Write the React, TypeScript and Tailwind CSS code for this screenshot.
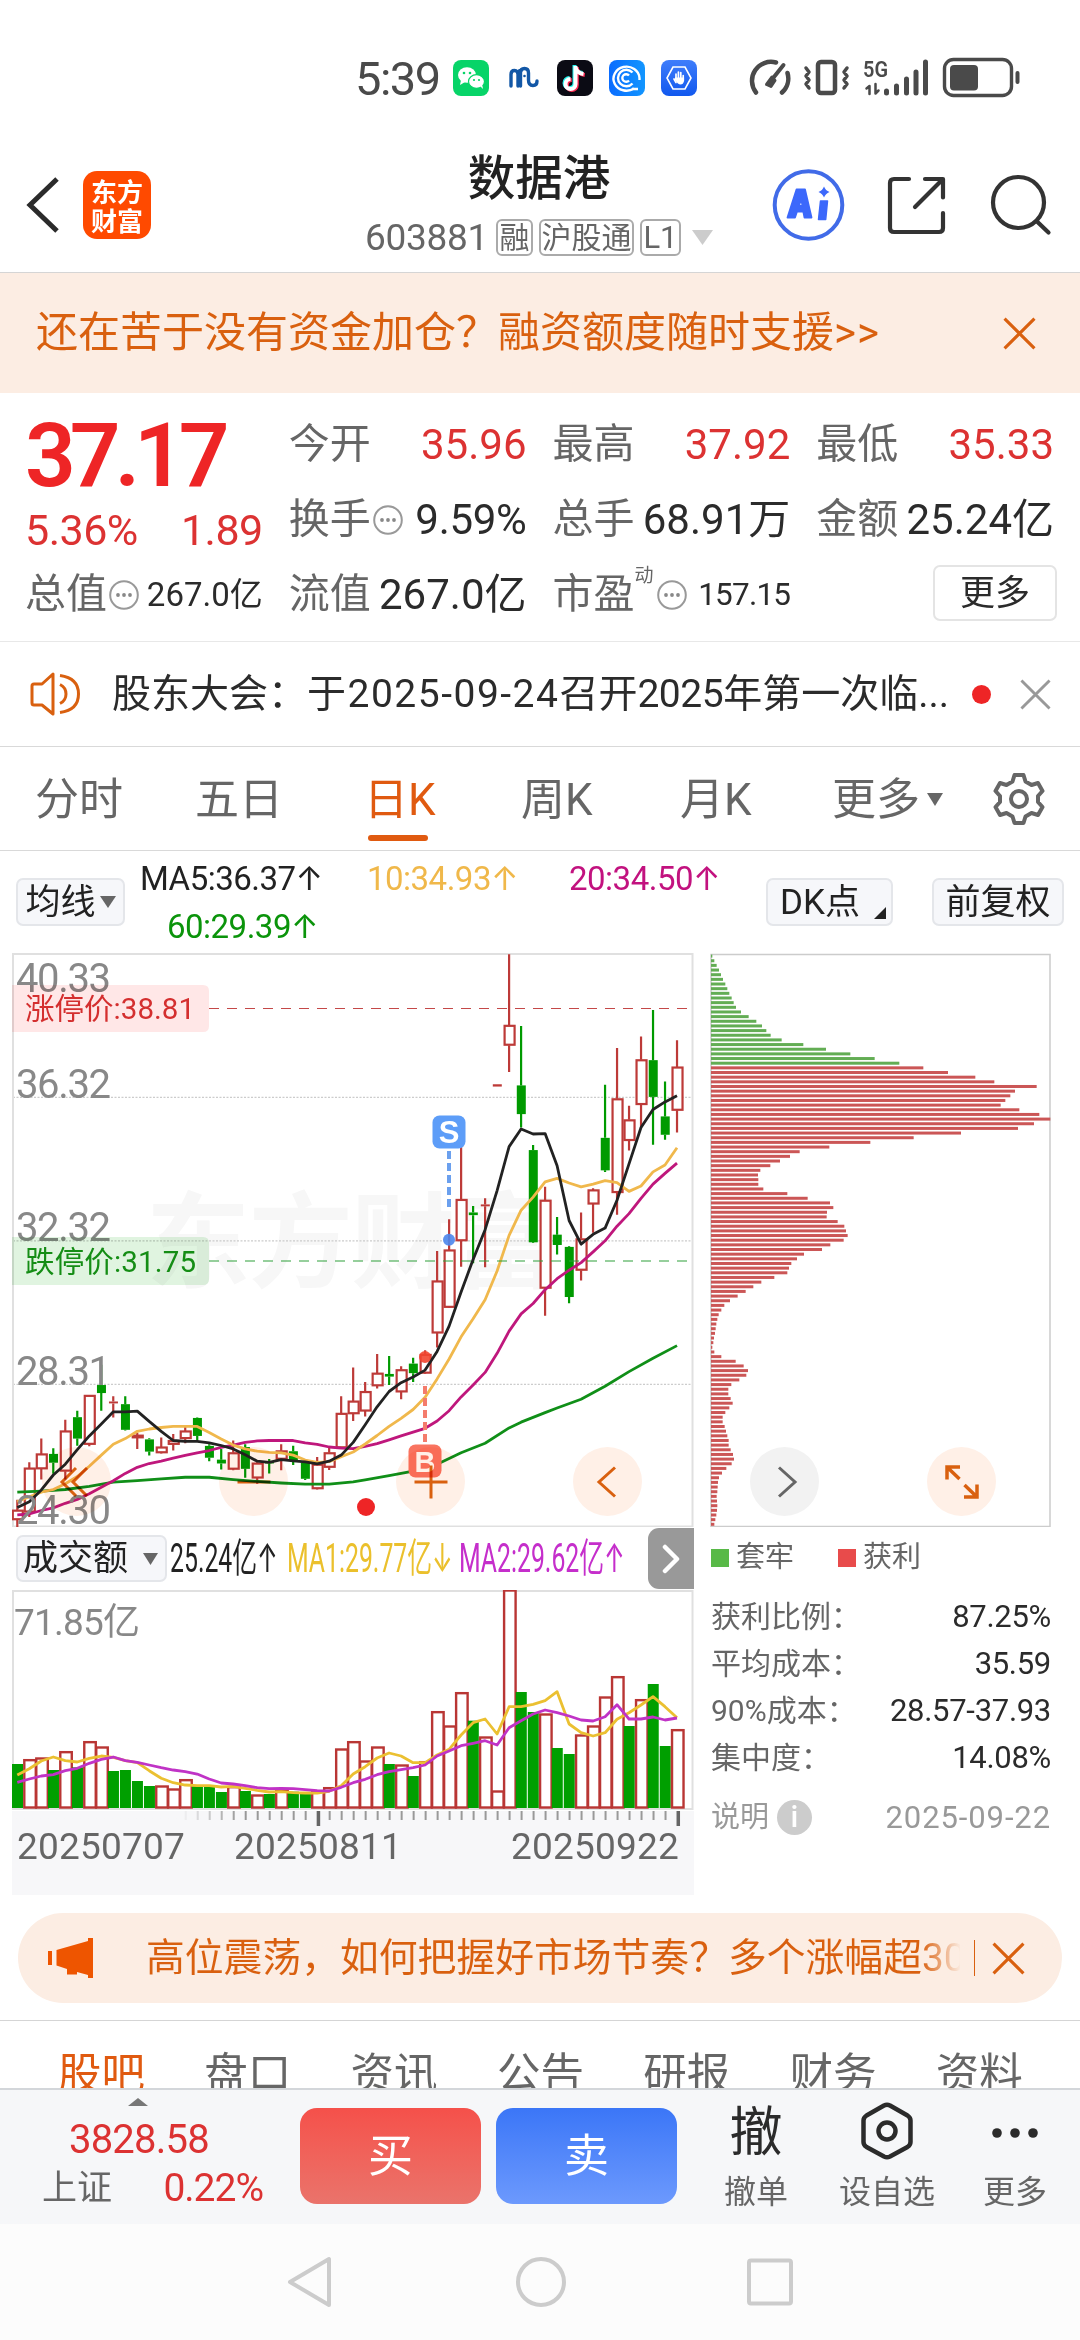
import type { ReactNode } from "react";

/* ---------- chart data ---------- */

const STEP = 11.995;
const X0 = 17.3;
const cx = (i: number) => X0 + i * STEP;
const py = (z: number) => 940 + z / 2.6133;
const vy = (z: number) => 1520 + z / 3;

type Candle = [string, number, number, number, number];

const candles: Candle[] = [
  ["r", 1463, 1490, 1515, 1535], ["r", 1365, 1380, 1495, 1508], ["r", 1303, 1343, 1382, 1410], ["g", 1328, 1343, 1366, 1395],
  ["r", 1254, 1283, 1388, 1410], ["g", 1230, 1247, 1303, 1322], ["r", 1190, 1190, 1318, 1323], ["g", 1110, 1163, 1184, 1230],
  ["x", 1192, 1206, 1211, 1248], ["g", 1192, 1213, 1280, 1282], ["r", 1288, 1294, 1301, 1330], ["g", 1302, 1305, 1337, 1347],
  ["r", 1300, 1325, 1340, 1342], ["r", 1291, 1308, 1318, 1334], ["r", 1268, 1283, 1303, 1315], ["g", 1248, 1249, 1296, 1308],
  ["g", 1318, 1322, 1353, 1362], ["g", 1330, 1358, 1368, 1384], ["r", 1308, 1340, 1383, 1386], ["g", 1318, 1325, 1382, 1405],
  ["r", 1365, 1367, 1406, 1421], ["g", 1356, 1364, 1368, 1394], ["r", 1318, 1335, 1357, 1386], ["g", 1322, 1336, 1360, 1372],
  ["g", 1360, 1366, 1408, 1411], ["r", 1351, 1370, 1434, 1436], ["r", 1327, 1340, 1378, 1385], ["r", 1192, 1237, 1327, 1330],
  ["r", 1117, 1205, 1238, 1257], ["r", 1155, 1180, 1231, 1245], ["r", 1082, 1132, 1165, 1172], ["g", 1087, 1134, 1141, 1163],
  ["r", 1114, 1123, 1181, 1200], ["g", 1092, 1107, 1132, 1155], ["r", 1072, 1083, 1132, 1134], ["r", 813, 891, 1027, 1065],
  ["r", 730, 810, 960, 962], ["r", 510, 678, 786, 854], ["g", 695, 712, 719, 845], ["x", 675, 691, 696, 855],
  ["x", 377, 377, 383, 383], ["r", 37, 223, 275, 345], ["g", 225, 380, 455, 490], ["g", 536, 549, 790, 792],
  ["r", 645, 680, 910, 982], ["g", 724, 770, 797, 822], ["g", 800, 802, 933, 949], ["r", 712, 781, 863, 890],
  ["r", 649, 653, 690, 765], ["g", 378, 517, 602, 606], ["r", 282, 415, 660, 718], ["r", 433, 470, 524, 550],
  ["r", 252, 313, 430, 490], ["g", 183, 314, 410, 535], ["g", 370, 461, 509, 522], ["r", 262, 332, 445, 503],
];

const ma5 = [1483, 1468, 1437, 1398, 1370, 1332, 1296, 1265, 1233, 1233, 1231, 1258, 1284, 1308, 1310, 1310, 1314, 1321, 1330, 1345, 1362, 1365, 1358, 1361, 1364, 1369, 1362, 1346, 1313, 1267, 1220, 1180, 1157, 1142, 1124, 1075, 1009, 920, 835, 757, 655, 540, 494, 507, 506, 590, 733, 795, 769, 753, 680, 585, 490, 443, 423, 407];
const ma10 = [1468, 1455, 1443, 1436, 1421, 1402, 1375, 1346, 1318, 1303, 1284, 1278, 1274, 1271, 1271, 1271, 1287, 1304, 1320, 1330, 1336, 1339, 1340, 1346, 1359, 1365, 1363, 1350, 1338, 1317, 1295, 1271, 1250, 1227, 1195, 1147, 1095, 1037, 990, 940, 865, 772, 706, 672, 632, 623, 635, 645, 638, 629, 634, 657, 643, 606, 588, 543];
const ma20 = [1502, 1500, 1491, 1484, 1472, 1462, 1447, 1430, 1413, 1394, 1378, 1368, 1362, 1354, 1347, 1340, 1334, 1326, 1320, 1313, 1309, 1308, 1308, 1308, 1314, 1318, 1325, 1328, 1329, 1323, 1316, 1306, 1296, 1286, 1276, 1257, 1230, 1194, 1163, 1130, 1080, 1022, 977, 950, 914, 885, 863, 843, 815, 786, 748, 715, 675, 638, 610, 583];
const ma60: [number, number][] = [[0, 1443], [2, 1440], [4, 1436], [6, 1428], [8, 1417], [10, 1413], [12, 1408], [14, 1404], [16, 1404], [18, 1410], [20, 1415], [22, 1419], [24, 1422], [26, 1422], [28, 1416], [29, 1411], [31, 1400], [33, 1388], [34, 1382], [35, 1370], [37, 1340], [39, 1315], [41, 1275], [42, 1260], [44, 1235], [45, 1223], [47, 1200], [49, 1166], [51, 1128], [53, 1093], [55, 1060]];

const volumes = "g732 r722 r717 g750 r698 g742 r668 r684 g753 g750 g783 g798 r801 r810 r782 g798 g800 g816 r803 g813 r828 g822 r812 g815 g820 r815 r806 r690 r668 r726 r684 g732 r738 g768 r728 r578 r621 r521 g602 r654 r816 r213 g516 g576 r585 g684 g702 r648 r621 r534 r473 g618 r542 g492 g678 r632".split(" ");
const vma1 = [765, 746, 723, 711, 722, 726, 715, 708, 712, 722, 728, 752, 775, 788, 795, 797, 797, 801, 799, 805, 811, 816, 815, 818, 819, 819, 814, 797, 762, 740, 714, 699, 708, 728, 728, 705, 688, 645, 608, 597, 642, 560, 560, 553, 542, 515, 612, 638, 648, 638, 598, 578, 555, 530, 560, 593];
const vma2 = [787, 777, 768, 764, 752, 745, 730, 718, 711, 722, 727, 735, 743, 750, 755, 762, 777, 789, 792, 797, 803, 806, 805, 806, 809, 812, 813, 802, 788, 778, 764, 755, 749, 743, 735, 708, 693, 677, 670, 662, 675, 623, 602, 582, 570, 578, 588, 600, 603, 590, 554, 597, 597, 591, 600, 594];

const chips = [66, 72, 79, 86, 92, 98, 105, 111, 117, 124, 130, 137, 152, 175, 198, 215, 228, 241, 274, 339, 407, 480, 553, 627, 699, 773, 855, 912, 1039, 974, 960, 945, 931, 987, 1047, 1080, 1031, 983, 812, 670, 540, 417, 328, 299, 269, 240, 210, 203, 204, 204, 219, 291, 352, 419, 429, 410, 409, 442, 462, 467, 472, 460, 420, 395, 341, 320, 303, 296, 291, 252, 213, 189, 166, 142, 119, 102, 93, 85, 81, 78, 76, 74, 71, 69, 66, 72, 93, 136, 160, 173, 168, 147, 123, 114, 114, 121, 127, 117, 105, 97, 97, 103, 107, 111, 115, 115, 121, 128, 131, 124, 108, 95, 86, 83, 82, 81, 79, 80, 81, 80, 78, 75, 72];

const line = (v: number[], f: (z: number) => number) => v.map((z, i) => `${cx(i).toFixed(1)},${f(z).toFixed(1)}`).join(" ");

/* ---------- small pieces ---------- */

const Up = () => <span className="font-['Inter']">↑</span>;

function Close({ size, color, w = 3 }: { size: number; color: string; w?: number }) {
  return (
    <svg width={size} height={size} viewBox="0 0 32 32" className="shrink-0">
      <path d="M1.5 1.5 30.5 30.5M30.5 1.5 1.5 30.5" stroke={color} strokeWidth={w} fill="none" />
    </svg>
  );
}

function Tri({ w, h, color }: { w: number; h: number; color: string }) {
  return (
    <svg width={w} height={h} viewBox="0 0 10 10" preserveAspectRatio="none" className="shrink-0">
      <path d="M0 0H10L5 10Z" fill={color} />
    </svg>
  );
}

function Dots() {
  return (
    <svg width="30" height="30" viewBox="0 0 30 30" className="shrink-0">
      <circle cx="15" cy="15" r="13.8" fill="none" stroke="#999" strokeWidth="2" />
      <circle cx="9" cy="15" r="1.9" fill="#888" />
      <circle cx="15" cy="15" r="1.9" fill="#888" />
      <circle cx="21" cy="15" r="1.9" fill="#888" />
    </svg>
  );
}

function Cell({ label, children, extra, red = false }: { label: string; children: ReactNode; extra?: ReactNode; red?: boolean }) {
  return (
    <div className="flex h-[75px] items-center justify-between whitespace-nowrap">
      <span className="-ml-px flex items-center text-[41px] text-[#666]">{label}{extra}</span>
      <span className={red ? "flex items-center text-[42px] text-[#dc3232]" : "flex items-center text-[42px] text-[#2b2b2b]"}>{children}</span>
    </div>
  );
}

/* ---------- sections ---------- */

function StatusBar() {
  return (
    <div className="flex h-[138px] items-center pt-[18px] pl-[355px] text-[#4a4a4a]">
      <span className="w-[98px] text-[47px] tracking-[-1.500px]">5:39</span>
      <div className="flex items-center gap-4">
        <svg width="36" height="36" viewBox="0 0 36 36">
          <rect width="36" height="36" rx="8" fill="#07d468" />
          <ellipse cx="14" cy="15" rx="9" ry="7.8" fill="#fff" />
          <path d="M8 20l-1 5 5-3z" fill="#fff" />
          <ellipse cx="23.5" cy="21.5" rx="8" ry="6.8" fill="#fff" stroke="#07d468" strokeWidth="1.2" />
          <path d="M27 26l3 3-1-5z" fill="#fff" />
          <circle cx="11" cy="13" r="1.3" fill="#07d468" /><circle cx="17" cy="13" r="1.3" fill="#07d468" />
          <circle cx="21" cy="20" r="1.1" fill="#07d468" /><circle cx="26" cy="20" r="1.1" fill="#07d468" />
        </svg>
        <svg width="36" height="36" viewBox="0 0 36 36" fill="none" stroke="#1257a6" strokeWidth="3.4" strokeLinecap="round">
          <path d="M6 26V14.5q0-4 3.5-4T13 14.500V26M13 14.500q0-4 3-4" />
          <path d="M15.500 26V13q0-4.500 4-4.500t4 4.500v7q0 5.500 4.500 5.500 4 0 4-4.500" />
          <circle cx="19.500" cy="16" r="1.300" fill="#1257a6" stroke="none" />
        </svg>
        <svg width="36" height="36" viewBox="0 0 36 36" fill="none">
          <rect width="36" height="36" rx="8" fill="#0b0b14" />
          <g strokeWidth="4">
            <path d="M18.500 6v18a5 5 0 1 1-5-5M18.500 7q1 6 8 7" stroke="#25f4ee" transform="translate(-1 -1)" />
            <path d="M18.500 6v18a5 5 0 1 1-5-5M18.500 7q1 6 8 7" stroke="#fe2c55" transform="translate(1.300 1)" />
            <path d="M18.500 6v18a5 5 0 1 1-5-5M18.500 7q1 6 8 7" stroke="#fff" />
          </g>
        </svg>
        <svg width="36" height="36" viewBox="0 0 36 36" fill="none" stroke="#fff" strokeWidth="2.400">
          <defs><linearGradient id="cg"><stop stopColor="#0a6cff" /><stop offset="1" stopColor="#1296ff" /></linearGradient></defs>
          <rect width="36" height="36" rx="8" fill="url(#cg)" stroke="none" />
          <path d="M25 28.500A13 12 0 1 1 30.500 18V20" />
          <path d="M23.500 23.500a8.300 8.300 0 1 1 0-11M20 20.500a3.800 3.800 0 1 1 0-5M23 29h6" />
        </svg>
        <svg width="36" height="36" viewBox="0 0 36 36" fill="none">
          <defs><linearGradient id="hg" x2="0" y2="1"><stop stopColor="#3f7dfb" /><stop offset="1" stopColor="#1158ee" /></linearGradient></defs>
          <rect width="36" height="36" rx="8" fill="url(#hg)" />
          <path d="M12 7h12l6 11-6 11H12L6 18z" stroke="#fff" strokeWidth="1.600" />
          <path d="M15 19v-5M17.400 18v-6M19.800 18v-5.500M22.200 20v-4.500M13 19l2 3.500" stroke="#fff" strokeWidth="1.700" strokeLinecap="round" />
          <path d="M14 17.500h9.100v3.500q-1 3.500-3.500 3.500t-5.600-4.500z" fill="#fff" />
        </svg>
      </div>
      <svg width="274" height="44" viewBox="746 56 274 44" className="ml-[49px]" fill="none" stroke="#4a4a4a" strokeWidth="4.500" strokeLinecap="round" strokeLinejoin="round">
        <path d="M756 92.500A19 19 0 0 1 776 62.500M787.500 73A19 19 0 0 1 782 92.500" />
        <path d="M770 82 783.500 65" strokeWidth="4" />
        <path d="M766.500 84.500 772 77l3 3.500-4 6z" fill="#4a4a4a" strokeWidth="3" />
        <rect x="818" y="62" width="17" height="31" rx="3" />
        <path d="M806 68l3 4-3 4 3 4-3 4 3 4M847 68l-3 4 3 4-3 4 3 4-3 4" strokeWidth="3.500" />
        <path d="M869.500 94V86l-3 2.500M875.500 84v9.500l3-3" strokeWidth="2.500" />
        <path d="M886.500 91v2M896.500 86v7M906.500 79v14M916 72v21M925.500 62v31" strokeWidth="5" />
        <rect x="944.500" y="59.500" width="67" height="36" rx="9" strokeWidth="3.400" />
        <rect x="950" y="65" width="28" height="25.500" rx="4" fill="#4a4a4a" stroke="none" />
        <path d="M1017.500 73v9" strokeWidth="4" />
        <text x="863" y="77" fontSize="22" fontWeight="600" fill="#4a4a4a" stroke="none" textLength="25" lengthAdjust="spacingAndGlyphs">5G</text>
      </svg>
    </div>
  );
}

function Header() {
  return (
    <div className="grid h-[135px] grid-cols-[1fr_auto_1fr] items-center border-b border-[#d5d5d5] pr-[28px] pl-[26px]">
      <div className="flex items-center gap-[23px]">
        <svg width="34" height="56" viewBox="0 0 34 56"><path d="M31 2 4 28 31 54" fill="none" stroke="#2b2b2b" strokeWidth="5" /></svg>
        <div className="grid h-[68px] w-[68px] grid-cols-2 place-content-center justify-items-center rounded-[14px] bg-[#ff4a00] px-[8px] font-['Noto_Sans_CJK_SC'] text-[26px] leading-[29px] font-bold text-white">
          <span>东</span><span>方</span><span>财</span><span>富</span>
        </div>
      </div>
      <div className="flex flex-col items-center pt-[2px]">
        <div className="text-[47.500px] font-medium text-[#222]">数据港</div>
        <div className="mt-[16px] flex items-center gap-[6px] text-[#666]">
          <span className="mr-[2px] text-[37px] tracking-[-0.300px]">603881</span>
          <span className="flex h-[37px] w-[37px] items-center justify-center rounded-[6px] border-2 border-[#aaa] text-[30px]">融</span>
          <span className="flex h-[37px] w-[95px] items-center justify-center rounded-[6px] border-2 border-[#aaa] text-[30px]">沪股通</span>
          <span className="flex h-[37px] w-[41px] items-center justify-center rounded-[6px] border-2 border-[#aaa] text-[31px]">L1</span>
          <span className="ml-[5px] flex"><Tri w={21} h={15} color="#ccc" /></span>
        </div>
      </div>
      <svg width="280" height="76" viewBox="772 167 280 76" className="justify-self-end" fill="none" strokeLinecap="round">
        <circle cx="808.500" cy="205" r="33.800" stroke="#416be8" strokeWidth="4" />
        <path d="M787.500 217.500 796.500 189.500h8.500l6.500 28h-7l-1.200-6h-6.300l-2 6z M799 206h3.500l-1.300-7.500z" fill="#3c68fb" fillRule="evenodd" stroke="#3c68fb" strokeWidth="1.800" strokeLinejoin="round" />
        <path d="M820.500 201h7l-1.800 18.500h-7.200z" fill="#3c68fb" stroke="#3c68fb" strokeWidth="1.500" strokeLinejoin="round" />
        <path d="M824 186.500q1.500 4 5.500 5.500-4 1.500-5.500 5.500-1.500-4-5.500-5.500 4-1.500 5.500-5.500z" fill="#3c68fb" />
        <path d="M909 179H894q-4 0-4 4V228q0 4 4 4H939q4 0 4-4V213" stroke="#333" strokeWidth="4.200" />
        <path d="M915 207 942 180M925 179h18v18.500" stroke="#333" strokeWidth="4.200" strokeLinejoin="round" />
        <circle cx="1018.500" cy="202.500" r="25.500" stroke="#333" strokeWidth="4.200" />
        <path d="M1036.500 221 1048.500 232.500" stroke="#333" strokeWidth="4.200" />
      </svg>
    </div>
  );
}

function Quote() {
  return (
    <div className="grid h-[249px] grid-cols-4 content-start gap-x-[27px] border-b border-[#e8e8e8] px-[26px] pt-[14px]">
      <div className="row-span-2 flex flex-col">
        <div className="-ml-px flex h-[96px] items-center text-[89px] font-semibold tracking-[-6px] text-[#ee2526]">37.17</div>
        <div className="-ml-px flex h-[54px] items-center justify-between text-[43px] tracking-[-0.500px] text-[#dc3232]">
          <span>5.36%</span><span>1.89</span>
        </div>
      </div>
      <Cell label="今开" red>35.96</Cell>
      <Cell label="最高" red>37.92</Cell>
      <Cell label="最低" red>35.33</Cell>
      <Cell label="换手" extra={<span className="ml-[2px] flex"><Dots /></span>}><span className="tracking-[-0.300px]">9.59%</span></Cell>
      <Cell label="总手">68.91万</Cell>
      <Cell label="金额">25.24亿</Cell>
      <Cell label="总值" extra={<span className="ml-[2px] flex"><Dots /></span>}><span className="text-[33px]">267.0亿</span></Cell>
      <Cell label="流值">267.0亿</Cell>
      <Cell label="市盈" extra={<><span className="mb-[38px] text-[19px]">动</span><span className="ml-[3px] flex"><Dots /></span></>}><span className="text-[31.500px] tracking-[-0.800px]">157.15</span></Cell>
      <div className="flex h-[72px] items-center justify-end">
        <div className="-mr-[3px] flex h-[56px] w-[124px] items-center justify-center rounded-[7px] border-2 border-[#e4e4e4] text-[35px] text-[#2b2b2b]">更多</div>
      </div>
    </div>
  );
}

function Notice() {
  return (
    <div className="flex h-[105px] items-center border-b border-[#d9d9d9] pl-[30px]">
      <svg width="51" height="44" viewBox="0 0 51 44" fill="none" stroke="#d9600f" strokeWidth="3" strokeLinejoin="round">
        <path d="M2 14q0-2 2-2h8L23 2V42L12 33H4q-2 0-2-2z" />
        <path d="M30 12.500q6 3 6 9.500t-6 9.500M30 3.500Q48.500 6 48.500 22T30 40.500" />
      </svg>
      <span className="ml-[31px] w-[836px] text-[39px] whitespace-nowrap text-[#2b2b2b]">
        股东大会：<span className="tracking-[1.500px]">于2025-09-24</span>召开<span className="tracking-[-0.500px]">2025</span>年第一次临...
      </span>
      <span className="ml-[24px] h-[19px] w-[19px] rounded-full bg-[#ee2526]" />
      <span className="ml-[29px]"><Close size={31} color="#999" /></span>
    </div>
  );
}

function PeriodTabs() {
  return (
    <div className="flex h-[104px] items-center border-b border-[#d9d9d9] pt-[2px] pl-[35px] text-[44px] whitespace-nowrap text-[#666]">
      <span className="w-[160px]">分时</span>
      <span className="w-[169px]">五日</span>
      <span className="relative w-[157px] text-[#e05a10]">
        日K
        <span className="absolute top-[57px] left-[4px] h-[6px] w-[60px] rounded-full bg-[#e05a10]" />
      </span>
      <span className="w-[159px]">周K</span>
      <span className="w-[152px]">月K</span>
      <span className="flex w-[160px] items-center gap-[7px]">更多<Tri w={16} h={13} color="#666" /></span>
      <svg width="54" height="54" viewBox="0 0 54 54" fill="none" stroke="#666" strokeWidth="4" strokeLinejoin="round" className="-mt-[2px]">
        <path d="M22.500 3h9l2 6.500 6 3.500 6.500-2 4.500 8-4.500 5v6l4.500 5-4.500 8-6.500-2-6 3.500-2 6.500h-9l-2-6.500-6-3.500-6.500 2-4.500-8 4.500-5v-6l-4.500-5 4.500-8 6.500 2 6-3.500z" />
        <circle cx="27" cy="27" r="8" />
      </svg>
    </div>
  );
}

function Indicators() {
  return (
    <div className="flex h-[102px] items-center pl-[16px] text-[33px] whitespace-nowrap">
      <div className="flex h-[48px] w-[109px] items-center justify-center gap-[4px] rounded-[7px] border-2 border-[#e4e6ea] bg-[#f6f7fa] text-[35px] text-[#222]">
        均线<Tri w={16} h={12} color="#666" />
      </div>
      <div className="ml-[15px] grid h-[96px] w-[626px] grid-cols-[178px_200px_248px] items-center tracking-[-0.500px]">
        <span className="text-right text-[#222]">MA5:36.37<Up /></span>
        <span className="text-right text-[#f0b84a]">10:34.93<Up /></span>
        <span className="pl-[51px] text-[#c2127f]">20:34.50<Up /></span>
        <span className="text-right text-[#0b940b]">60:29.39<Up /></span>
      </div>
      <div className="relative flex h-[48px] w-[127px] items-center rounded-[7px] border-2 border-[#e4e6ea] bg-[#f6f7fa] pl-[12px] text-[35px] text-[#222]">
        DK点
        <svg width="12" height="12" viewBox="0 0 12 12" className="absolute right-[5px] bottom-[5px]"><path d="M12 0V12H0z" fill="#222" /></svg>
      </div>
      <div className="ml-[39px] flex h-[48px] w-[132px] items-center justify-center rounded-[7px] border-2 border-[#e4e6ea] bg-[#f6f7fa] text-[35px] text-[#222]">前复权</div>
    </div>
  );
}

function KLine() {
  const labels: [string, number][] = [["40.33", 978], ["36.32", 1083.5], ["32.32", 1226.5], ["28.31", 1370.5], ["24.30", 1509.5]];
  return (
    <svg width="682" height="574" viewBox="12 953 682 574" className="shrink-0">
      <text x="146" y="1280" fontSize="104" fontWeight="700" fill="#f7f7f7" fontFamily="Noto Sans CJK SC" textLength="412">东方财富</text>
      <path d="M13 1097.300H693M13 1240.800H693M13 1384.300H693" stroke="#ccc" strokeWidth="1.200" strokeDasharray="2 1.500" />
      <rect x="13" y="954" width="679.500" height="572.500" fill="none" stroke="#e0e0e0" strokeWidth="2" />
      {candles.map(([k, hi, t, b, lo], i) => {
        const x = cx(i);
        const c = k === "g" ? "#009a00" : "#bd3a38";
        return (
          <g key={i} stroke={c} strokeWidth="2.200">
            <path d={`M${x} ${py(hi)}V${py(t)}M${x} ${py(b)}V${py(lo)}`} />
            {k === "r" ? (
              <rect x={x - 4.500} y={py(t) + 0.500} width="10" height={Math.max(py(b) - py(t) - 1, 1.500)} fill="#fff" />
            ) : (
              <rect x={x - 4.300} y={py(t)} width="9" height={py(b) - py(t)} fill={c} stroke="none" />
            )}
          </g>
        );
      })}
      <g fill="none" strokeWidth="2.800" strokeLinejoin="round">
        <polyline points={ma60.map(([i, z]) => `${cx(i)},${py(z)}`).join(" ")} stroke="#108f18" />
        <polyline points={line(ma20, py)} stroke="#bf177c" />
        <polyline points={line(ma10, py)} stroke="#f0b84c" />
        <polyline points={line(ma5, py)} stroke="#222" />
      </g>
      <path d="M209 1008.500H688" stroke="#c44848" strokeWidth="1.200" strokeDasharray="10 8" />
      <path d="M209 1261H688" stroke="#2fa03a" strokeWidth="1.200" strokeDasharray="10 8" />
      <path d="M449 1151V1208" stroke="#6ba0ee" strokeWidth="4" strokeDasharray="8 4" />
      <circle cx="449" cy="1239.700" r="6" fill="#4b86ec" opacity=".9" />
      <path d="M425 1386V1442" stroke="#f47c6c" strokeWidth="4" strokeDasharray="8 4" />
      <circle cx="425" cy="1357" r="6" fill="#f2452f" opacity=".9" />
      <rect x="432.500" y="1115.500" width="33" height="33" rx="7" fill="#5d9df8" />
      <text x="449" y="1143" textAnchor="middle" fontSize="31" fontWeight="700" fill="#fff" fontFamily="Liberation Sans">S</text>
      <rect x="408.500" y="1444.500" width="33" height="33" rx="7" fill="#f97460" />
      <text x="425" y="1471.500" textAnchor="middle" fontSize="29" fontWeight="700" fill="#fff" fontFamily="Liberation Sans">B</text>
      <circle cx="366" cy="1507" r="9" fill="#ee2526" />
      <g fill="#888" fontSize="40">
        {labels.map(([t, y]) => <text key={t} x="16" y={y + 14.300} textLength="95">{t}</text>)}
      </g>
      <path d="M12 985H203q6 0 6 6V1026q0 6-6 6H12z" fill="#ffe7e7" className="mix-blend-multiply" />
      <text x="25" y="1019" fontSize="29.500" fill="#d42f2f" textLength="170">涨停价:38.81</text>
      <path d="M12 1237H203q6 0 6 6V1279q0 6-6 6H12z" fill="#e0f4e0" className="mix-blend-multiply" />
      <text x="25" y="1271.500" fontSize="29.500" fill="#158d15" textLength="171">跌停价:31.75</text>
    </svg>
  );
}

function ChipChart() {
  return (
    <svg width="342" height="574" viewBox="710 953 342 574" className="ml-[16px] shrink-0">
      <path d="M711 954.500H1050V1526.500H711z" fill="none" stroke="#ccc" strokeWidth="1.500" />
      {chips.map((e, i) => (
        <rect key={i} x="711" y={py(42 + i * 12.172) - 1.500} width={(e - 62) / 3} height="3" fill={i < 24 ? "#63ad54" : "#cb5656"} />
      ))}
    </svg>
  );
}

function RoundButton({ children, gray = false }: { children: ReactNode; gray?: boolean }) {
  return (
    <span className={gray ? "flex h-[69px] w-[69px] items-center justify-center rounded-full bg-[#f2f2f2] text-[#666] mix-blend-multiply" : "flex h-[69px] w-[69px] items-center justify-center rounded-full bg-[#fff0e7] text-[#d9600f] mix-blend-multiply"}>
      <svg width="36" height="36" viewBox="-18 -18 36 36" fill="none" stroke="currentColor" strokeWidth="3">{children}</svg>
    </span>
  );
}

function Charts() {
  return (
    <div className="relative flex h-[574px] pl-[12px]">
      <KLine />
      <ChipChart />
      <div className="absolute bottom-[11px] left-[42px] flex gap-[108px]">
        <RoundButton><path d="M-1-14-15 0-1 14M10-14-4 0 10 14" /></RoundButton>
        <RoundButton><path d="M-16.500 0H16.500" /></RoundButton>
        <RoundButton><path d="M-16.500 0H16.500M0-16.500V16.500" /></RoundButton>
        <RoundButton><path d="M7-14.500-9 0 7 14.500" /></RoundButton>
        <RoundButton gray><path d="M-6-14.500 10 0-6 14.500" /></RoundButton>
        <RoundButton><path d="M-15-2.500V-15H-2M-15-15-2.500-3M15 2.500V15H2M15 15 2.500 3" strokeWidth="3.500" /></RoundButton>
      </div>
    </div>
  );
}

function Volume() {
  return (
    <div className="w-[682px]">
      <div className="flex h-[63px] items-center pl-[4px] text-[40px] whitespace-nowrap">
        <div className="flex h-[47px] w-[151px] items-center justify-between rounded-[7px] border-2 border-[#e4e6ea] bg-[#f6f7fa] pr-[7px] pl-[5px] text-[35px] text-[#222]">
          成交额<Tri w={15} h={12} color="#666" />
        </div>
        <div className="ml-[3px] w-[117px]"><span className="inline-block origin-left scale-x-[.620] text-[#222]">25.24亿<Up /></span></div>
        <div className="w-[172px]"><span className="inline-block origin-left scale-x-[.620] text-[#ebc02c]">MA1:29.77亿<span className="font-['Inter']">↓</span></span></div>
        <div className="w-[189px]"><span className="inline-block origin-left scale-x-[.620] text-[#c52ecb]">MA2:29.62亿<Up /></span></div>
        <div className="flex h-[61px] w-[46px] items-center justify-center rounded-l-[11px] bg-[#999]">
          <svg width="18" height="30" viewBox="0 0 18 30"><path d="M3 3 15 15 3 27" fill="none" stroke="#fff" strokeWidth="4.500" strokeLinecap="round" strokeLinejoin="round" /></svg>
        </div>
      </div>
      <svg width="682" height="236" viewBox="12 1590 682 236" className="block bg-linear-to-b from-white from-[221px] to-[#f7f7f9] to-[221px]">
        <rect x="13" y="1591" width="679.500" height="218" fill="none" stroke="#e0e0e0" strokeWidth="2" />
        {volumes.map((s, i) => {
          const z = Number(s.slice(1));
          const x = cx(i);
          return s[0] === "g" ? (
            <rect key={i} x={x - 5.300} y={vy(z)} width="11" height={1808 - vy(z)} fill="#009f00" />
          ) : (
            <rect key={i} x={x - 5} y={vy(z) - 0.500} width="11.500" height={1808 - vy(z)} fill="#fff" stroke="#b93634" strokeWidth="2.400" />
          );
        })}
        <g fill="none" strokeWidth="2.800" strokeLinejoin="round">
          <polyline points={line(vma1, vy)} stroke="#ebc031" />
          <polyline points={line(vma2, vy)} stroke="#c033c6" />
        </g>
        {volumes.map((_, i) => {
          const major = i === 25 || i === 55;
          return i > 13 && (
            <rect key={i} x={cx(i) - 0.500} y="1811" width={major ? 3.500 : 2} height={major ? 15 : 9} fill={major ? "#666" : "#999"} opacity={Math.min(1, (i - 13.500) / 5)} />
          );
        })}
        <text x="14" y="1635" fontSize="37" fill="#888" textLength="126">71.85亿</text>
      </svg>
      <div className="flex h-[69px] justify-between bg-[#f7f7f9] pt-[2px] pr-[15px] pl-[5px] text-[37px] tracking-[0.200px] text-[#666]">
        <span className="w-[217px]">20250707</span>
        <span className="grow">20250811</span>
        <span>20250922</span>
      </div>
    </div>
  );
}

function Stat({ label, value }: { label: string; value: string }) {
  return (
    <div className="flex h-[47px] items-center justify-between">
      <span className="text-[30px] text-[#666]">{label}</span>
      <span className="text-[31px] tracking-[-0.300px] text-[#2b2b2b]">{value}</span>
    </div>
  );
}

function ChipStats() {
  return (
    <div className="ml-[17px] w-[340px]">
      <div className="flex h-[61px] items-center text-[29px] text-[#666]">
        <span className="mr-[7px] h-[18px] w-[18px] bg-[#58b947]" /><span className="w-[102px]">套牢</span>
        <span className="mr-[7px] h-[18px] w-[18px] bg-[#e84b4b]" />获利
      </div>
      <div className="mt-[5px]">
        <Stat label="获利比例：" value="87.25%" />
        <Stat label="平均成本：" value="35.59" />
        <Stat label="90%成本：" value="28.57-37.93" />
        <Stat label="集中度：" value="14.08%" />
      </div>
      <div className="mt-[16px] flex h-[40px] items-center text-[29px] text-[#999]">
        说明
        <span className="ml-[8px] flex h-[35px] w-[35px] items-center justify-center rounded-full bg-[#ccc] font-['Inter'] text-[28px] font-semibold text-white">i</span>
        <span className="ml-auto text-[31px] tracking-[0.900px]">2025-09-22</span>
      </div>
    </div>
  );
}

function Promo() {
  return (
    <div className="mx-[18px] mt-[18px] flex h-[90px] items-center rounded-full bg-[#fcede3] pl-[30px] text-[#d9600f]">
      <svg width="46" height="40" viewBox="0 0 46 40" fill="#ee5500">
        <rect x="0" y="13" width="4" height="14" /><path d="M8.500 12 40 3V0h5v40h-5v-3l-11-3v2.500H19V31l-10.500-3.500z" />
      </svg>
      <div className="ml-[52px] w-[814px] overflow-hidden bg-linear-to-r from-[#d9600f] from-[775px] to-transparent to-[815px] bg-clip-text text-[38.800px] leading-[56px] whitespace-nowrap text-transparent">
        高位震荡，如何把握好市场节奏？多个涨幅超30
      </div>
      <span className="ml-[14px] h-[36px] w-px bg-[#d9600f]" />
      <span className="ml-[17px]"><Close size={33} color="#d9600f" /></span>
    </div>
  );
}

function BottomBar() {
  return (
    <div className="flex h-[136px] border-t-2 border-[#d3d6da] bg-[#f6f7f9] whitespace-nowrap">
      <div className="flex w-[300px] flex-col pl-[42px]">
        <svg width="20" height="8" viewBox="0 0 20 8" className="mt-[8px] ml-[86px]"><path d="M10 0 20 8H0z" fill="#777" /></svg>
        <span className="mt-[12px] flex h-[44px] items-center pl-[27px] text-[40px] tracking-[-0.800px] text-[#dc3232]">3828.58</span>
        <span className="mt-[4px] flex h-[44px] w-[221px] items-center justify-between text-[35px] text-[#666]">
          上证<span className="text-[39px] tracking-[-1px] text-[#dc3232]">0.22%</span>
        </span>
      </div>
      <div className="mt-[18px] flex h-[96px] w-[181px] items-center justify-center rounded-[17px] bg-linear-to-b from-[#f5504a] to-[#ea736b] text-[45px] text-white">买</div>
      <div className="mt-[18px] ml-[15px] flex h-[96px] w-[181px] items-center justify-center rounded-[17px] bg-linear-to-b from-[#3b76f7] to-[#6c99fd] text-[45px] text-white">卖</div>
      <div className="ml-[30px] flex w-[98px] flex-col items-center text-[32px] text-[#666]">
        <span className="flex h-[86px] items-center text-[53px] text-[#2b2b2b]">撤</span><span>撤单</span>
      </div>
      <div className="ml-[33px] flex w-[98px] flex-col items-center text-[32px] text-[#666]">
        <span className="flex h-[86px] items-center">
          <svg width="52" height="58" viewBox="0 0 52 58" fill="none" stroke="#2b2b2b" strokeWidth="4.500" strokeLinejoin="round" className="-mt-[4px]">
            <path d="M23 3.500q3-1.500 6 0L46.500 13.500q3 2 3 5V40q0 3-3 5L29 54.500q-3 1.500-6 0L5.500 45q-3-2-3-5V18.500q0-3 3-5z" /><circle cx="26" cy="29" r="8.500" />
          </svg>
        </span>
        <span>设自选</span>
      </div>
      <div className="ml-[30px] flex w-[98px] flex-col items-center text-[32px] text-[#666]">
        <span className="flex h-[86px] items-center"><svg width="46" height="10" viewBox="0 0 46 10" fill="#2b2b2b"><circle cx="5" cy="5" r="4.800" /><circle cx="23" cy="5" r="4.800" /><circle cx="41" cy="5" r="4.800" /></svg></span>
        <span>更多</span>
      </div>
    </div>
  );
}

export default function App() {
  const tabs = ["股吧", "盘口", "资讯", "公告", "研报", "财务", "资料"];
  return (
    <div className="flex h-[2340px] w-[1080px] flex-col overflow-hidden bg-white font-['Roboto','Noto_Sans_CJK_SC',sans-serif] leading-none *:shrink-0">
      <StatusBar />
      <Header />
      <div className="flex h-[120px] items-center justify-between bg-[#fcede3] pr-[44px] pl-[36px] text-[#d9600f]">
        <span className="text-[42px] whitespace-nowrap">还在苦于没有资金加仓？融资额度随时支援<span className="tracking-[1px]">&gt;&gt;</span></span>
        <Close size={33} color="#d9600f" />
      </div>
      <Quote />
      <Notice />
      <PeriodTabs />
      <Indicators />
      <Charts />
      <div className="flex h-[368px] pl-[12px]">
        <Volume />
        <ChipStats />
      </div>
      <Promo />
      <div className="mt-[17px] flex h-[68px] gap-[59.300px] overflow-hidden border-t border-[#d5d5d5] pt-[32px] pl-[58px] text-[43.500px] whitespace-nowrap text-[#666]">
        {tabs.map((t, i) => <span key={t} className={i === 0 ? "text-[#e05a10]" : ""}>{t}</span>)}
      </div>
      <BottomBar />
      <div className="flex h-[116px] items-center justify-center bg-[#fcfcfc]">
        <svg width="506" height="54" viewBox="286 2255 506 54" fill="none" stroke="#ccc" strokeWidth="4" strokeLinejoin="round">
          <path d="M328 2259V2305L289 2282z" /><circle cx="540" cy="2282" r="23" /><rect x="748" y="2260.500" width="42" height="43" rx="2" />
        </svg>
      </div>
    </div>
  );
}
